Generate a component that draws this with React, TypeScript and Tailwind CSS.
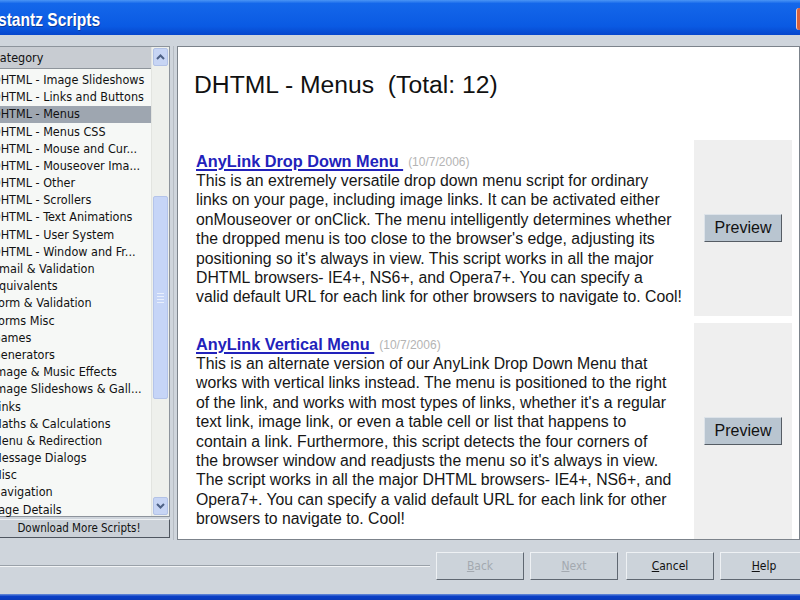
import { ReactNode } from "react"

const categories = [
  "DHTML - Image Slideshows",
  "DHTML - Links and Buttons",
  "DHTML - Menus",
  "DHTML - Menus CSS",
  "DHTML - Mouse and Cur...",
  "DHTML - Mouseover Ima...",
  "DHTML - Other",
  "DHTML - Scrollers",
  "DHTML - Text Animations",
  "DHTML - User System",
  "DHTML - Window and Fr...",
  "Email & Validation",
  "Equivalents",
  "Form & Validation",
  "Forms Misc",
  "Games",
  "Generators",
  "Image & Music Effects",
  "Image Slideshows & Gall...",
  "Links",
  "Maths & Calculations",
  "Menu & Redirection",
  "Message Dialogs",
  "Misc",
  "Navigation",
  "Page Details",
]

const scripts = [
  {
    title: "AnyLink Drop Down Menu",
    date: "(10/7/2006)",
    height: "h-[176px]",
    lines: [
      "This is an extremely versatile drop down menu script for ordinary",
      "links on your page, including image links. It can be activated either",
      "onMouseover or onClick. The menu intelligently determines whether",
      "the dropped menu is too close to the browser's edge, adjusting its",
      "positioning so it's always in view. This script works in all the major",
      "DHTML browsers- IE4+, NS6+, and Opera7+. You can specify a",
      "valid default URL for each link for other browsers to navigate to. Cool!",
    ],
  },
  {
    title: "AnyLink Vertical Menu",
    date: "(10/7/2006)",
    height: "h-[216px]",
    lines: [
      "This is an alternate version of our AnyLink Drop Down Menu that",
      "works with vertical links instead. The menu is positioned to the right",
      "of the link, and works with most types of links, whether it's a regular",
      "text link, image link, or even a table cell or list that happens to",
      "contain a link. Furthermore, this script detects the four corners of",
      "the browser window and readjusts the menu so it's always in view.",
      "The script works in all the major DHTML browsers- IE4+, NS6+, and",
      "Opera7+. You can specify a valid default URL for each link for other",
      "browsers to navigate to. Cool!",
    ],
  },
]

function Chevron({ up }: { up?: boolean }) {
  return (
    <svg width="9" height="6" viewBox="0 0 9 6">
      <path
        d={up ? "M1 5 L4.5 1.5 L8 5" : "M1 1 L4.5 4.5 L8 1"}
        fill="none"
        stroke="#4d6185"
        strokeWidth="2"
      />
    </svg>
  )
}

function WizButton({ label, disabled, className }: { label: ReactNode; disabled?: boolean; className?: string }) {
  return (
    <div
      className={`w-[88px] h-[28px] shrink-0 flex items-center justify-center bg-[#ccd3da] border border-t-[#eef1f4] border-l-[#eef1f4] border-b-[#5f6771] border-r-[#5f6771] text-[12px] ${
        disabled ? "text-[#a3a9b0]" : "text-[#111]"
      } ${className ?? ""}`}
    >
      {label}
    </div>
  )
}

export default function App() {
  return (
    <div className="w-[800px] h-[600px] overflow-hidden flex flex-col bg-[#cfd5dc] font-['Liberation_Sans',Arial,sans-serif]">
      {/* title bar */}
      <div className="h-[35px] shrink-0 flex items-center justify-between bg-[linear-gradient(to_bottom,#4a95f5_0%,#1467ea_10%,#0a5ae3_75%,#0646cc_100%)]">
        <span className="-ml-[2px] pt-[6px] text-white font-bold text-[19px] scale-x-[0.82] origin-left [text-shadow:1px_1px_0_#0b3a9a]">
          stantz Scripts
        </span>
        <div className="w-[4px] h-[22px] mt-[3px] bg-[#d9613c] rounded-l-[3px] border-l border-white/70" />
      </div>

      {/* main area */}
      <div className="flex-1 flex pt-[11px] min-h-0">
        {/* left column */}
        <div className="-ml-[12px] w-[182px] shrink-0 flex flex-col font-['DejaVu_Sans_Condensed','DejaVu_Sans',sans-serif]">
          <div className="h-[471px] flex border border-[#8d949c] bg-[#f6f8f6]">
            <div className="flex-1 flex flex-col min-w-0">
              <div className="h-[22px] flex items-center pl-[3px] pt-[2px] bg-[#c8ccd2] border-b border-[#8e949b] text-[12.5px] text-[#111]">
                Category
              </div>
              <div className="pt-[3px] flex flex-col">
                {categories.map((c) => (
                  <div
                    key={c}
                    className={`h-[17.2px] flex items-center pl-[3px] text-[12.5px] text-[#111] whitespace-nowrap ${
                      c === "DHTML - Menus" ? "bg-[#9ea6b0]" : ""
                    }`}
                  >
                    {c}
                  </div>
                ))}
              </div>
            </div>
            {/* scrollbar */}
            <div className="w-[18px] flex flex-col bg-[#eef0ec] border-l border-[#e2e4e0]">
              <div className="h-[18px] mt-[1px] mx-[1px] flex items-center justify-center bg-[#c7d5f4] border border-[#b2c2e6] rounded-[2px]">
                <Chevron up />
              </div>
              <div className="flex-1 flex flex-col pt-[130px] pb-[98px] px-[1px]">
                <div className="flex-1 flex items-center justify-center bg-[#c6d5f7] border border-[#b4c4ea] rounded-[2px]">
                  <div className="flex flex-col gap-[2px]">
                    <div className="w-[7px] h-px bg-[#e9effc]" />
                    <div className="w-[7px] h-px bg-[#e9effc]" />
                    <div className="w-[7px] h-px bg-[#e9effc]" />
                    <div className="w-[7px] h-px bg-[#e9effc]" />
                  </div>
                </div>
              </div>
              <div className="h-[18px] mb-[1px] mx-[1px] flex items-center justify-center bg-[#c7d5f4] border border-[#b2c2e6] rounded-[2px]">
                <Chevron />
              </div>
            </div>
          </div>
          <div className="mt-[2px] h-[21px] flex items-center justify-center bg-[#cbd1d8] border border-t-[#eef1f4] border-l-[#eef1f4] border-b-[#4f5660] border-r-[#4f5660] text-[11.5px] text-[#111]">
            Download More Scripts!
          </div>
        </div>

        {/* divider */}
        <div className="w-[7px] shrink-0 flex justify-center">
          <div className="w-px h-[494px] bg-[#b6bcc3]" />
        </div>

        {/* content panel */}
        <div className="w-[623px] h-[494px] shrink-0 bg-white border border-[#7c838b] flex flex-col overflow-hidden">
          <div className="pl-[16px] pt-[19px] h-[95px] text-[24.7px] text-[#111] whitespace-pre">
            DHTML - Menus  (Total: 12)
          </div>
          <div className="flex flex-col gap-[7px]">
            {scripts.map((s) => (
              <div key={s.title} className={`flex ${s.height}`}>
                <div className="w-[516px] pl-[18px] pt-[12px]">
                  <div className="h-[19px] flex items-center gap-[5px] whitespace-nowrap">
                    <span className="text-[16.3px] font-bold text-[#2222bb] underline underline-offset-[2px] decoration-[1.5px] whitespace-pre">
                      {s.title + " "}
                    </span>
                    <span className="text-[12px] text-[#b4b4b4]">{s.date}</span>
                  </div>
                  <div className="text-[15.8px] leading-[19.4px] text-[#161616]">
                    {s.lines.map((l) => (
                      <div key={l} className="whitespace-nowrap">
                        {l}
                      </div>
                    ))}
                  </div>
                </div>
                <div className="w-[98px] shrink-0 bg-[#efefef] flex items-center justify-center">
                  <div className="w-[78px] h-[28px] flex items-center justify-center bg-[#b9c5d0] border border-t-[#dde3e9] border-l-[#dde3e9] border-b-[#555c64] border-r-[#555c64] text-[16px] text-[#111]">
                    Preview
                  </div>
                </div>
              </div>
            ))}
          </div>
        </div>
      </div>

      {/* footer */}
      <div className="h-[56px] shrink-0 flex items-center font-['DejaVu_Sans_Condensed','DejaVu_Sans',sans-serif]">
        <div className="w-[430px] shrink-0 h-[2px] border-t border-[#9aa1a9] border-b border-b-[#f2f4f6]" />
        <WizButton className="ml-[6px]" disabled label={<><u>B</u>ack</>} />
        <WizButton className="ml-[6px]" disabled label={<><u>N</u>ext</>} />
        <WizButton className="ml-[8px]" label={<><u>C</u>ancel</>} />
        <WizButton className="ml-[6px]" label={<><u>H</u>elp</>} />
      </div>
      <div className="h-[6px] shrink-0 bg-[linear-gradient(to_bottom,#6d8fd8,#0a3fc6_40%,#0a3ab8)]" />
    </div>
  )
}
